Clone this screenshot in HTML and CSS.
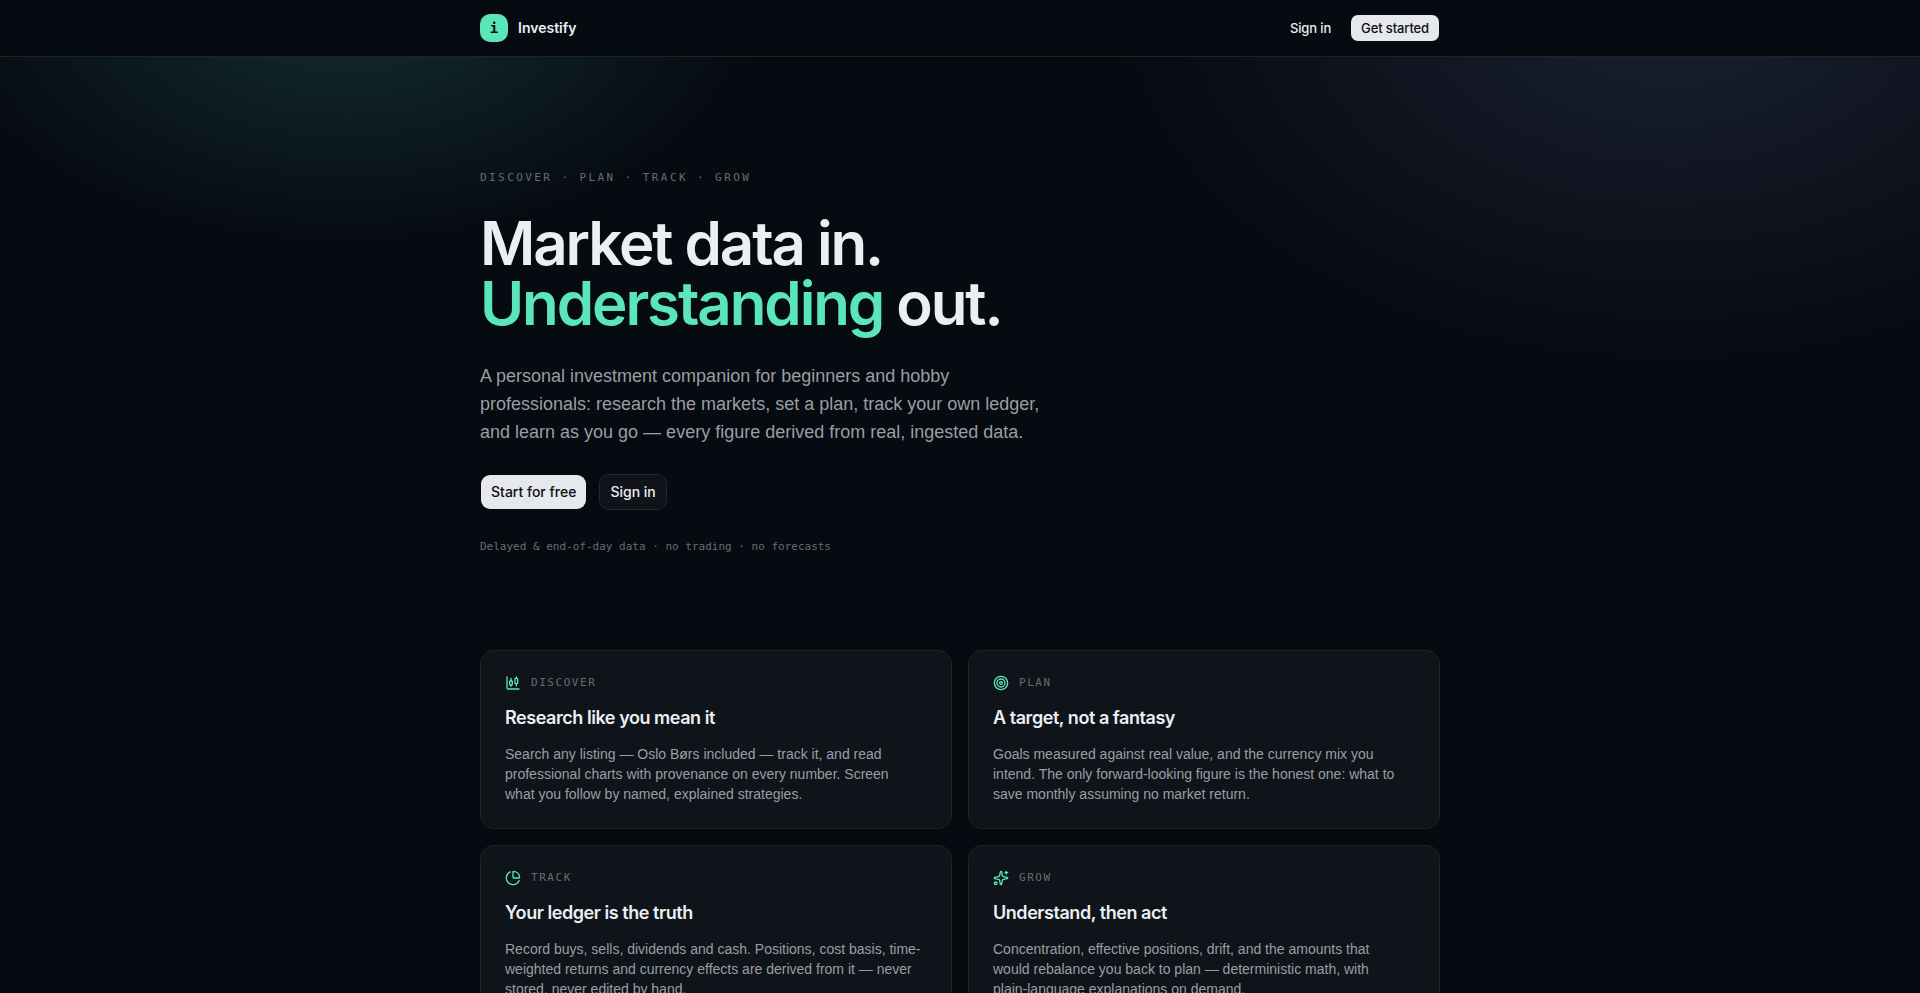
FILE: index.html
```
<!DOCTYPE html>
<html lang="en">
<head>
    <meta charset="UTF-8">
    <meta name="viewport" content="width=device-width, initial-scale=1.0">
    <title>Investify</title>
    <link rel="stylesheet" href="styles.css">
</head>
<body>
    <header class="site-header">
        <div class="container header-row">
            <a href="#" class="brand">
                <span class="brand-mark">i</span>
                <span class="brand-name">Investify</span>
            </a>
            <nav class="header-nav">
                <a href="#signin" class="btn btn-small btn-ghost">Sign in</a>
                <a href="#signup" class="btn btn-small btn-primary">Get started</a>
            </nav>
        </div>
    </header>

    <main class="container">
        <section class="hero">
            <p class="eyebrow">Discover · Plan · Track · Grow</p>
            <h1>Market data in.<br><span class="accent">Understanding</span> out.</h1>
            <p class="lead">A personal investment companion for beginners and hobby professionals: research the markets, set a plan, track your own ledger, and learn as you go — every figure derived from real, ingested data.</p>
            <div class="hero-actions">
                <a href="#signup" class="btn btn-primary">Start for free</a>
                <a href="#signin" class="btn btn-outline">Sign in</a>
            </div>
            <p class="note">Delayed &amp; end-of-day data · no trading · no forecasts</p>
        </section>

        <section class="cards">
            <article class="card">
                <div class="card-label">
                    <svg class="icon" viewBox="0 0 24 24" aria-hidden="true">
                        <path d="M9 5v4"/>
                        <rect width="4" height="6" x="7" y="9" rx="1"/>
                        <path d="M9 15v2"/>
                        <path d="M17 3v2"/>
                        <rect width="4" height="8" x="15" y="5" rx="1"/>
                        <path d="M17 13v3"/>
                        <path d="M3 3v16a2 2 0 0 0 2 2h16"/>
                    </svg>
                    <span>Discover</span>
                </div>
                <h2>Research like you mean it</h2>
                <p>Search any listing — Oslo Børs included — track it, and read professional charts with provenance on every number. Screen <span class="nowrap">what you</span> follow by named, explained strategies.</p>
            </article>
            <article class="card">
                <div class="card-label">
                    <svg class="icon" viewBox="0 0 24 24" aria-hidden="true">
                        <circle cx="12" cy="12" r="10"/>
                        <circle cx="12" cy="12" r="6"/>
                        <circle cx="12" cy="12" r="2"/>
                    </svg>
                    <span>Plan</span>
                </div>
                <h2>A target, not a fantasy</h2>
                <p>Goals measured against real value, and the currency mix you intend. The only forward-looking figure is the honest one: what to save monthly assuming no market return.</p>
            </article>
            <article class="card">
                <div class="card-label">
                    <svg class="icon" viewBox="0 0 24 24" aria-hidden="true">
                        <path d="M21 12c.552 0 1.005-.449.95-.998a10 10 0 0 0-8.953-8.951c-.55-.055-.998.398-.998.95v8a1 1 0 0 0 1 1z"/>
                        <path d="M21.21 15.89A10 10 0 1 1 8 2.83"/>
                    </svg>
                    <span>Track</span>
                </div>
                <h2>Your ledger is the truth</h2>
                <p>Record buys, sells, dividends and cash. Positions, cost basis, time-weighted returns and currency effects are derived from it — never stored, never edited by hand.</p>
            </article>
            <article class="card">
                <div class="card-label">
                    <svg class="icon" viewBox="0 0 24 24" aria-hidden="true">
                        <path d="M11.017 2.814a1 1 0 0 1 1.966 0l1.051 5.558a2 2 0 0 0 1.594 1.594l5.558 1.051a1 1 0 0 1 0 1.966l-5.558 1.051a2 2 0 0 0-1.594 1.594l-1.051 5.558a1 1 0 0 1-1.966 0l-1.051-5.558a2 2 0 0 0-1.594-1.594l-5.558-1.051a1 1 0 0 1 0-1.966l5.558-1.051a2 2 0 0 0 1.594-1.594z"/>
                        <path d="M20 2v4"/>
                        <path d="M22 4h-4"/>
                        <circle cx="4" cy="20" r="2"/>
                    </svg>
                    <span>Grow</span>
                </div>
                <h2>Understand, then act</h2>
                <p>Concentration, effective positions, drift, and the amounts that <span class="nowrap">would rebalance</span> you back to plan — deterministic math, with <span class="nowrap">plain-language</span> explanations on demand.</p>
            </article>
        </section>
    </main>
</body>
</html>
```
FILE: styles.css
```
:root {
    --bg: #060a11;
    --text: #eceef2;
    --muted: #9a9ea3;
    --faint: #686c70;
    --mint: #5ae6b9;
    --line: #1f2326;
    --sans: Inter, "Liberation Sans", sans-serif;
    --copy: "Liberation Sans", Arial, sans-serif;
    --mono: "DejaVu Sans Mono", "Liberation Mono", monospace;
}

* {
    margin: 0;
    padding: 0;
    box-sizing: border-box;
}

body {
    min-height: 100vh;
    font-family: var(--sans);
    font-size: 14px;
    line-height: 20px;
    color: var(--text);
    background:
        radial-gradient(420px 250px at 18% 0, rgba(50, 135, 125, 0.29), transparent),
        radial-gradient(560px 370px at 87% 0, rgba(90, 100, 145, 0.25), transparent),
        var(--bg);
    background-repeat: no-repeat;
}

a {
    color: inherit;
    text-decoration: none;
}

.container {
    width: 100%;
    max-width: 1008px;
    margin: 0 auto;
    padding: 0 24px;
}

.nowrap {
    white-space: nowrap;
}

/* Header */
.site-header {
    background: var(--bg);
    border-bottom: 1px solid var(--line);
}

.header-row {
    display: flex;
    align-items: center;
    justify-content: space-between;
    height: 56px;
}

.brand {
    display: flex;
    align-items: center;
    gap: 10px;
}

.brand-mark {
    display: grid;
    place-items: center;
    width: 28px;
    height: 28px;
    border-radius: 10px;
    background: var(--mint);
    color: #07110e;
    font-family: var(--mono);
    font-size: 14px;
    font-weight: 700;
}

.brand-name {
    font-size: 14px;
    font-weight: 600;
}

.header-nav {
    display: flex;
    align-items: center;
    gap: 8px;
}

/* Buttons */
.btn {
    display: inline-flex;
    align-items: center;
    justify-content: center;
    height: 36px;
    padding: 0 10px;
    border: 1px solid transparent;
    border-radius: 10px;
    background-clip: padding-box;
    font-size: 14px;
    font-weight: 500;
    white-space: nowrap;
}

.btn-small {
    height: 28px;
    border-radius: 8px;
    font-size: 13px;
    letter-spacing: -0.01em;
}

.btn-primary {
    background-color: #e6e8ed;
    color: #0b0e14;
}

.btn-primary:hover {
    background-color: #d3d6dc;
}

.btn-outline {
    background-color: #101319;
    border-color: #25282c;
}

.btn-outline:hover,
.btn-ghost:hover {
    background-color: #1a1e25;
}

/* Hero */
.hero {
    padding: 112px 0 94px;
}

.eyebrow {
    color: var(--faint);
    font-family: var(--mono);
    font-size: 11px;
    line-height: 18px;
    letter-spacing: 0.22em;
    text-transform: uppercase;
}

h1 {
    margin-top: 26px;
    font-size: 60px;
    font-weight: 600;
    line-height: 60px;
    letter-spacing: -0.035em;
}

.accent {
    color: var(--mint);
}

.lead {
    max-width: 576px;
    margin-top: 29px;
    color: var(--muted);
    font-family: var(--copy);
    font-size: 18px;
    line-height: 28px;
}

.hero-actions {
    display: flex;
    gap: 12px;
    margin-top: 28px;
}

.note {
    margin-top: 28px;
    color: var(--faint);
    font-family: var(--mono);
    font-size: 11px;
    line-height: 18px;
}

/* Feature cards */
.cards {
    display: grid;
    grid-template-columns: repeat(2, 1fr);
    gap: 16px;
    padding-bottom: 96px;
}

.card {
    padding: 24px;
    border: 1px solid var(--line);
    border-radius: 14px;
    background: #0f141a;
}

.card-label {
    display: flex;
    align-items: center;
    gap: 10px;
    color: var(--faint);
    font-family: var(--mono);
    font-size: 11px;
    line-height: 16px;
    letter-spacing: 0.14em;
    text-transform: uppercase;
}

.icon {
    width: 16px;
    height: 16px;
    fill: none;
    stroke: var(--mint);
    stroke-width: 2;
    stroke-linecap: round;
    stroke-linejoin: round;
}

.card h2 {
    margin-top: 13px;
    font-size: 18px;
    font-weight: 600;
    line-height: 28px;
    letter-spacing: -0.025em;
}

.card p {
    margin-top: 12px;
    color: var(--muted);
    font-family: var(--copy);
}

@media (max-width: 720px) {
    .cards {
        grid-template-columns: 1fr;
    }

    h1 {
        font-size: 44px;
        line-height: 48px;
    }
}
```
